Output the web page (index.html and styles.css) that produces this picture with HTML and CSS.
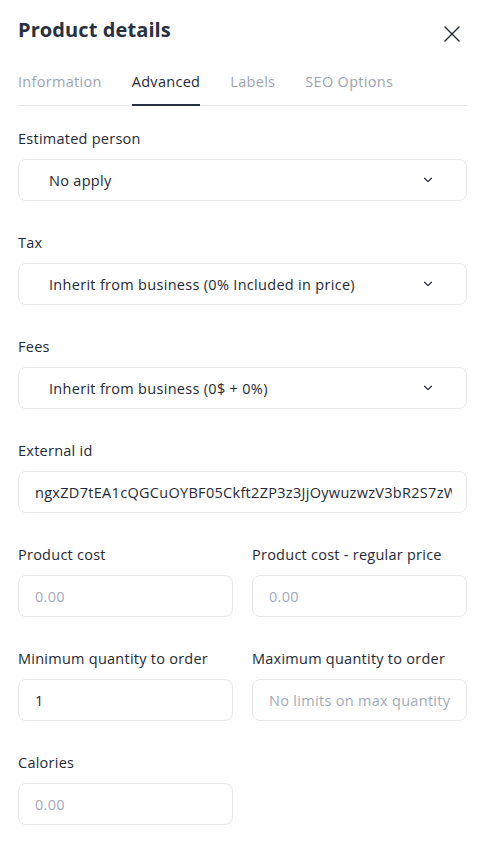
FILE: index.html
```html
<!DOCTYPE html>
<html lang="en">
<head>
<meta charset="utf-8">
<title>Product details</title>
<link rel="stylesheet" href="styles.css">
</head>
<body>
<div class="panel">
  <header class="header">
    <h1 class="title">Product details</h1>
    <button class="close" aria-label="Close">
      <svg width="16" height="16" viewBox="0 0 16 16"><path d="M1 1L15 15M15 1L1 15" stroke="#1f2937" stroke-width="1.4" stroke-linecap="round"/></svg>
    </button>
  </header>
  <nav class="tabs">
    <span class="tab">Information</span>
    <span class="tab active">Advanced</span>
    <span class="tab">Labels</span>
    <span class="tab">SEO Options</span>
  </nav>
  <form class="form">
    <div class="field">
      <label class="label">Estimated person</label>
      <div class="select"><span>No apply</span><svg class="chev" width="10" height="6" viewBox="0 0 10 6"><path d="M1.5 1.2L5 4.6L8.5 1.2" fill="none" stroke="#1f2937" stroke-width="1.2" stroke-linecap="round" stroke-linejoin="round"/></svg></div>
    </div>
    <div class="field">
      <label class="label">Tax</label>
      <div class="select"><span>Inherit from business (0% Included in price)</span><svg class="chev" width="10" height="6" viewBox="0 0 10 6"><path d="M1.5 1.2L5 4.6L8.5 1.2" fill="none" stroke="#1f2937" stroke-width="1.2" stroke-linecap="round" stroke-linejoin="round"/></svg></div>
    </div>
    <div class="field">
      <label class="label">Fees</label>
      <div class="select"><span>Inherit from business (0$ + 0%)</span><svg class="chev" width="10" height="6" viewBox="0 0 10 6"><path d="M1.5 1.2L5 4.6L8.5 1.2" fill="none" stroke="#1f2937" stroke-width="1.2" stroke-linecap="round" stroke-linejoin="round"/></svg></div>
    </div>
    <div class="field">
      <label class="label" for="ext">External id</label>
      <input class="input" id="ext" type="text" readonly value="ngxZD7tEA1cQGCuOYBF05Ckft2ZP3z3JjOywuzwzV3bR2S7zWv1kPq">
    </div>
    <div class="row">
      <div class="field">
        <label class="label" for="pc">Product cost</label>
        <input class="input" id="pc" type="text" placeholder="0.00">
      </div>
      <div class="field">
        <label class="label" for="pcr">Product cost - regular price</label>
        <input class="input" id="pcr" type="text" placeholder="0.00">
      </div>
    </div>
    <div class="row">
      <div class="field">
        <label class="label" for="minq">Minimum quantity to order</label>
        <input class="input" id="minq" type="text" value="1">
      </div>
      <div class="field">
        <label class="label" for="maxq">Maximum quantity to order</label>
        <input class="input" id="maxq" type="text" placeholder="No limits on max quantity to order">
      </div>
    </div>
    <div class="row">
      <div class="field">
        <label class="label" for="cal">Calories</label>
        <input class="input" id="cal" type="text" placeholder="0.00">
      </div>
      <div></div>
    </div>
  </form>
</div>
</body>
</html>
```

FILE: styles.css
```css
* { box-sizing: border-box; }
html, body { margin: 0; padding: 0; background: #ffffff; }
body {
  font-family: "Open Sans", "Noto Sans", sans-serif;
  color: #1f2937;
}
.panel { padding: 15px 16px 0 18px; }
.header {
  display: flex;
  align-items: center;
  justify-content: space-between;
  height: 30px;
}
.title {
  margin: 0;
  font-size: 20px;
  font-weight: 700;
  line-height: 30px;
  letter-spacing: 0.1px;
  color: #283142;
}
.close {
  border: 0;
  background: none;
  padding: 0;
  margin: 8px 7px 0 0;
  width: 16px;
  height: 16px;
  display: flex;
}
.tabs {
  display: flex;
  gap: 30px;
  margin-top: 27px;
  border-bottom: 1px solid #e5e7eb;
}
.tab {
  font-size: 14.5px;
  line-height: 20px;
  letter-spacing: 0.3px;
  padding-bottom: 12px;
  color: #9ca3af;
  border-bottom: 2px solid transparent;
  margin-bottom: -1px;
}
.tab.active {
  color: #1f2937;
  border-bottom-color: #283142;
}
.form {
  padding-top: 23px;
  display: flex;
  flex-direction: column;
  gap: 32px;
}
.field {
  display: flex;
  flex-direction: column;
  gap: 10px;
  min-width: 0;
}
.label {
  font-size: 14.5px;
  line-height: 20px;
  letter-spacing: 0.25px;
  color: #1f2937;
}
.select, .input {
  height: 42px;
  width: 100%;
  border: 1px solid #e5e7eb;
  border-radius: 8px;
  font-family: "Open Sans", "Noto Sans", sans-serif;
  font-size: 14.5px;
  letter-spacing: 0.3px;
  color: #1f2937;
  background: #ffffff;
  white-space: nowrap;
  overflow: hidden;
}
.select {
  display: flex;
  align-items: center;
  padding: 0 33px 0 30px;
  justify-content: space-between;
}
.input {
  padding: 0 14px 0 16px;
  outline: none;
  margin: 0;
}
.input::placeholder { color: #a3abb8; opacity: 1; }
.row {
  display: grid;
  grid-template-columns: 1fr 1fr;
  column-gap: 19px;
}
```
